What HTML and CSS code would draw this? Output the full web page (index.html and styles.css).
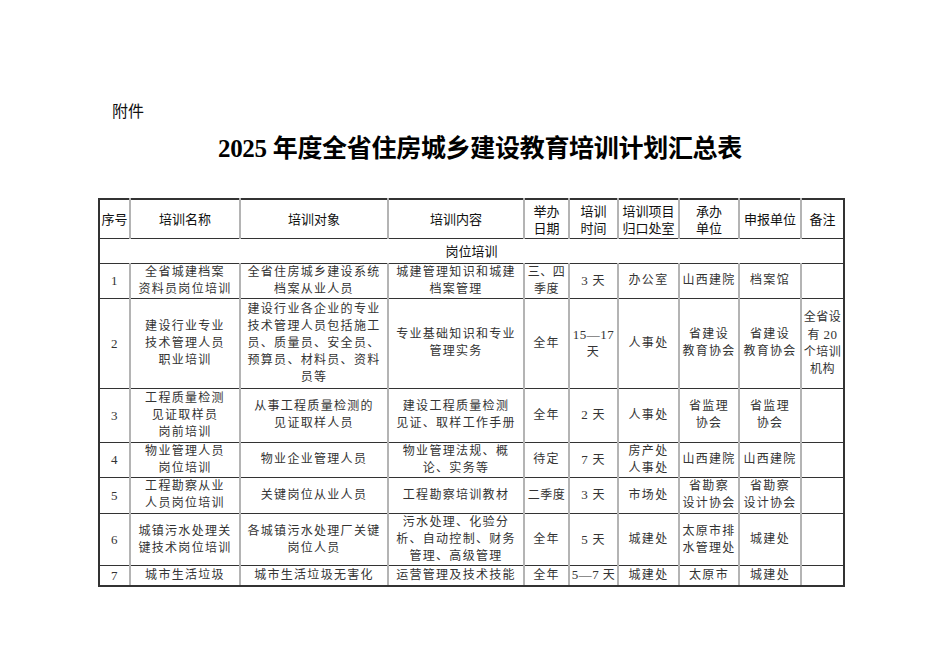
FILE: index.html
```html
<!DOCTYPE html>
<html lang="zh">
<head>
<meta charset="utf-8">
<title>2025年度全省住房城乡建设教育培训计划汇总表</title>
<link rel="stylesheet" href="styles.css">
</head>
<body>
<div class="page">
  <div class="attach">附件</div>
  <h1 class="title"><span class="num">2025</span> 年度全省住房城乡建设教育培训计划汇总表</h1>
  <table class="plan">
    <colgroup>
      <col class="w-no">
      <col class="w-name">
      <col class="w-target">
      <col class="w-content">
      <col class="w-date">
      <col class="w-time">
      <col class="w-dept">
      <col class="w-org">
      <col class="w-apply">
      <col class="w-note">
    </colgroup>
    <thead>
      <tr class="r-head">
        <th>序号</th>
        <th>培训名称</th>
        <th>培训对象</th>
        <th>培训内容</th>
        <th>举办<br>日期</th>
        <th>培训<br>时间</th>
        <th>培训项目<br>归口处室</th>
        <th>承办<br>单位</th>
        <th>申报单位</th>
        <th>备注</th>
      </tr>
    </thead>
    <tbody>
      <tr class="r-sec"><td colspan="10" class="sec">岗位培训</td></tr>
      <tr class="r1">
        <td class="num">1</td>
        <td>全省城建档案<br>资料员岗位培训</td>
        <td>全省住房城乡建设系统<br>档案从业人员</td>
        <td>城建管理知识和城建<br>档案管理</td>
        <td class="tight">三、四<br>季度</td>
        <td><span class="num">3</span> 天</td>
        <td>办公室</td>
        <td>山西建院</td>
        <td>档案馆</td>
        <td></td>
      </tr>
      <tr class="r2">
        <td class="num">2</td>
        <td>建设行业专业<br>技术管理人员<br>职业培训</td>
        <td>建设行业各企业的专业<br>技术管理人员包括施工<br>员、质量员、安全员、<br>预算员、材料员、资料<br>员等</td>
        <td>专业基础知识和专业<br>管理实务</td>
        <td>全年</td>
        <td><span class="num">15—17</span><br>天</td>
        <td>人事处</td>
        <td>省建设<br>教育协会</td>
        <td>省建设<br>教育协会</td>
        <td class="tight">全省设<br>有 <span class="num">20</span><br>个培训<br>机构</td>
      </tr>
      <tr class="r3">
        <td class="num">3</td>
        <td>工程质量检测<br>见证取样员<br>岗前培训</td>
        <td>从事工程质量检测的<br>见证取样人员</td>
        <td>建设工程质量检测<br>见证、取样工作手册</td>
        <td>全年</td>
        <td><span class="num">2</span> 天</td>
        <td>人事处</td>
        <td>省监理<br>协会</td>
        <td>省监理<br>协会</td>
        <td></td>
      </tr>
      <tr class="r4">
        <td class="num">4</td>
        <td>物业管理人员<br>岗位培训</td>
        <td>物业企业管理人员</td>
        <td>物业管理法规、概<br>论、实务等</td>
        <td>待定</td>
        <td><span class="num">7</span> 天</td>
        <td>房产处<br>人事处</td>
        <td>山西建院</td>
        <td>山西建院</td>
        <td></td>
      </tr>
      <tr class="r5">
        <td class="num">5</td>
        <td>工程勘察从业<br>人员岗位培训</td>
        <td>关键岗位从业人员</td>
        <td>工程勘察培训教材</td>
        <td class="tight">二季度</td>
        <td><span class="num">3</span> 天</td>
        <td>市场处</td>
        <td>省勘察<br>设计协会</td>
        <td>省勘察<br>设计协会</td>
        <td></td>
      </tr>
      <tr class="r6">
        <td class="num">6</td>
        <td>城镇污水处理关<br>键技术岗位培训</td>
        <td>各城镇污水处理厂关键<br>岗位人员</td>
        <td>污水处理、化验分<br>析、自动控制、财务<br>管理、高级管理</td>
        <td>全年</td>
        <td><span class="num">5</span> 天</td>
        <td>城建处</td>
        <td>太原市排<br>水管理处</td>
        <td>城建处</td>
        <td></td>
      </tr>
      <tr class="r7">
        <td class="num">7</td>
        <td>城市生活垃圾</td>
        <td>城市生活垃圾无害化</td>
        <td>运营管理及技术技能</td>
        <td>全年</td>
        <td class="tight"><span class="num">5—7</span> 天</td>
        <td>城建处</td>
        <td>太原市</td>
        <td>城建处</td>
        <td></td>
      </tr>
    </tbody>
  </table>
</div>
</body>
</html>
```

FILE: styles.css
```css
html, body {
  margin: 0;
  padding: 0;
  background: #ffffff;
}

.page {
  width: 950px;
  padding-top: 100px;
  box-sizing: border-box;
}

.attach {
  margin-left: 112px;
  font-family: "Noto Sans CJK SC", sans-serif;
  font-size: 16px;
  line-height: 20px;
  color: #111;
}

.title {
  margin: 14px 0 0 0;
  padding-left: 10px;
  text-align: center;
  font-family: "Liberation Serif", "Noto Sans CJK SC", serif;
  font-weight: 700;
  font-size: 25px;
  line-height: 30px;
  color: #000;
  letter-spacing: -0.3px;
}

.title .num {
  font-family: "Liberation Serif", serif;
}

.plan {
  margin: 34px 0 0 98px;
  width: 745px;
  table-layout: fixed;
  border-collapse: collapse;
  font-family: "Liberation Serif", "Noto Sans CJK SC", serif;
  font-size: 12px;
  color: #333;
}

.w-no { width: 31px; }
.w-name { width: 110px; }
.w-target { width: 148px; }
.w-content { width: 136px; }
.w-date { width: 45px; }
.w-time { width: 49px; }
.w-dept { width: 61px; }
.w-org { width: 60px; }
.w-apply { width: 62px; }
.w-note { width: 43px; }

.plan th,
.plan td {
  padding: 0;
  text-align: center;
  vertical-align: middle;
  border-top: 1px solid #333;
  border-bottom: 1px solid #333;
  border-left: 2px solid #b4b4b4;
  border-right: 2px solid #b4b4b4;
  overflow: hidden;
  white-space: nowrap;
}

.plan th:first-child,
.plan td:first-child {
  border-left: 2px solid #333;
}

.plan th:last-child,
.plan td:last-child {
  border-right: 2px solid #333;
}

.plan thead th {
  border-top: 2px solid #333;
  font-family: "Noto Sans CJK SC", sans-serif;
  font-weight: 400;
  font-size: 13px;
  line-height: 17px;
  color: #111;
}

.plan td {
  line-height: 17px;
  letter-spacing: 1.3px;
}

.plan td.tight {
  letter-spacing: 0.5px;
}

.plan .num {
  font-family: "Liberation Serif", serif;
  font-size: 13px;
  letter-spacing: 0.5px;
}

.plan td.sec {
  font-family: "Noto Sans CJK SC", sans-serif;
  font-size: 13px;
  letter-spacing: 0;
  color: #111;
}

.r-head { height: 39px; }
.r-sec { height: 25px; }
.r1 { height: 33.5px; }
.r2 { height: 90.5px; }
.r3 { height: 53.5px; }
.r4 { height: 34px; }
.r5 { height: 36.5px; }
.r6 { height: 50.5px; }
.r7 { height: 20px; }

.r7 td {
  border-bottom: 2px solid #333;
}
```
